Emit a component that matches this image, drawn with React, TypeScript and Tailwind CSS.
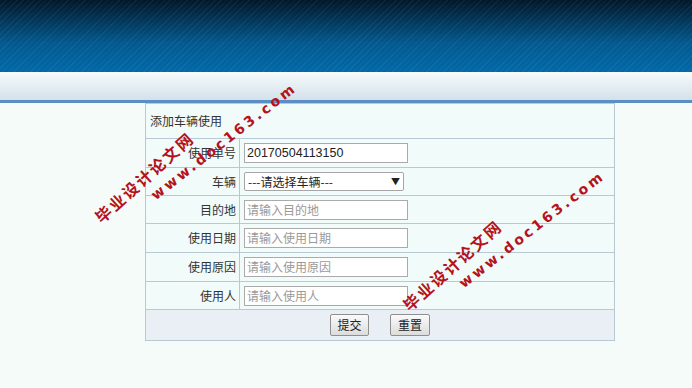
import React from 'react'

const rows = [
  { label: '使用单号', value: '20170504113150', h: 'h-[29px]' },
  { label: '车辆', select: true, h: 'h-[28px]' },
  { label: '目的地', placeholder: '请输入目的地', h: 'h-[28px]' },
  { label: '使用日期', placeholder: '请输入使用日期', h: 'h-[29px]' },
  { label: '使用原因', placeholder: '请输入使用原因', h: 'h-[29px]' },
  { label: '使用人', placeholder: '请输入使用人', h: 'h-[28px]' },
]

const Watermark = ({ x, y }: { x: number; y: number }) => (
  <div className="pointer-events-none absolute" style={{ left: x, top: y }}>
    <span className="absolute left-[-60px] top-[25px] rotate-[-42deg] whitespace-nowrap text-[16px] font-bold tracking-[2px] text-[#b5121b]">
      毕业设计论文网
    </span>
    <span className="absolute left-[-7px] top-[-9px] rotate-[-38deg] whitespace-nowrap font-['DejaVu_Sans',sans-serif] text-[14px] font-bold tracking-[3px] text-[#b5121b]">
      www.doc163.com
    </span>
  </div>
)

const App = () => {
  return (
    <div className="relative min-h-[388px] w-full overflow-hidden bg-[#f5fbf9] font-['Noto_Sans_CJK_SC','Liberation_Sans',sans-serif] text-[12px] text-[#333]">
      {/* top banner */}
      <div className="h-[72px] w-full bg-[repeating-linear-gradient(135deg,rgba(255,255,255,0.05)_0px,rgba(255,255,255,0.05)_1px,transparent_1px,transparent_4px),linear-gradient(to_bottom,#021829,#03598f_60%,#0169a8)]" />
      <div className="h-[28px] w-full bg-[linear-gradient(to_bottom,#f7fbfc,#d3e1ea)]" />
      <div className="h-[3px] w-full bg-[#5b8ec4]" />

      <table className="ml-[145px] w-[470px] border-collapse border border-[#b9c9d3] bg-[#f0fbfa]">
        <tbody>
          <tr className="h-[35px]">
            <td colSpan={2} className="border border-[#b9c9d3] px-[4px] text-left text-[12px] text-[#333]">
              添加车辆使用
            </td>
          </tr>
          {rows.map((r) => (
            <tr key={r.label} className={r.h}>
              <td className="w-[94px] border border-[#b9c9d3] pr-[3px] text-right text-[12px] text-[#333]">{r.label}</td>
              <td className="border border-[#b9c9d3] pl-[4px]">
                {r.select ? (
                  <div className="flex h-[19px] w-[160px] items-center justify-between rounded-[2px] border border-[#a6a6a6] bg-white px-[3px] text-[12px] text-[#222]">
                    <span>---请选择车辆---</span>
                    <span className="text-[9px]">▼</span>
                  </div>
                ) : (
                  <div className="flex h-[20px] w-[164px] items-center border border-[#aaaaaa] bg-white px-[2px]">
                    {r.value ? (
                      <span className="font-['Liberation_Sans',sans-serif] text-[12.5px] text-[#222]">{r.value}</span>
                    ) : (
                      <span className="text-[12px] text-[#9a9a9a]">{r.placeholder}</span>
                    )}
                  </div>
                )}
              </td>
            </tr>
          ))}
          <tr className="h-[31px] bg-[#e9eff4]">
            <td colSpan={2} className="border border-[#b9c9d3]">
              <div className="flex justify-center gap-[21px]">
                <button className="h-[22px] w-[39px] rounded-[2px] border border-[#8f8f8f] bg-[linear-gradient(to_bottom,#fafafa,#dcdcdc)] text-[12px] text-[#222]">
                  提交
                </button>
                <button className="h-[22px] w-[40px] rounded-[2px] border border-[#8f8f8f] bg-[linear-gradient(to_bottom,#fafafa,#dcdcdc)] text-[12px] text-[#222]">
                  重置
                </button>
              </div>
            </td>
          </tr>
        </tbody>
      </table>

      <Watermark x={141} y={140} />
      <Watermark x={449} y={228} />
    </div>
  )
}

export default App
